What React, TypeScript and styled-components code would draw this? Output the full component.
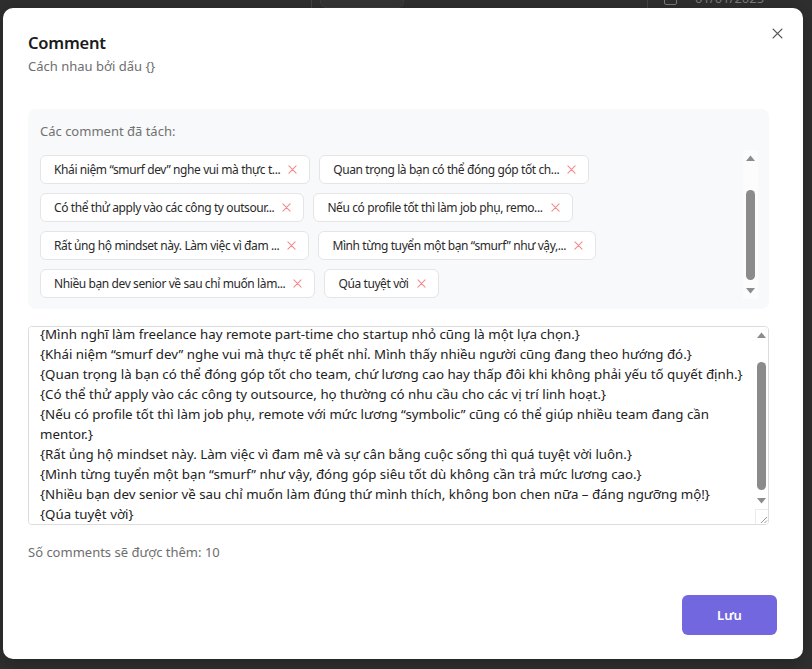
import React, { useEffect, useLayoutEffect, useRef, useState } from "react";
import styled, { createGlobalStyle } from "styled-components";

const FONT = `"Noto Sans", "Open Sans", sans-serif`;

const GlobalStyle = createGlobalStyle`
  html, body { margin: 0; padding: 0; height: 100%; }
  body { background: #2f2f2f; font-family: ${FONT}; overflow: hidden; }
  #root { height: 100%; }
`;

/* ---------- page behind the overlay ---------- */
const Page = styled.div`
  height: 100%;
  background: #2f2f2f;
`;

const PageToolbar = styled.div`
  display: flex;
  align-items: flex-end;
  height: 20px;
  margin-top: -12px;
  color: #8a8a8a;
  font-size: 13px;
`;

const ToolbarDivider = styled.div<{ $ml: number }>`
  width: 1px;
  height: 100%;
  background: #444;
  margin-left: ${(p) => p.$ml}px;
`;

const ToolbarBox = styled.div`
  width: 82px;
  height: 100%;
  margin-left: 8px;
  border-radius: 0 0 6px 6px;
  background: #353535;
  border: 1px solid #3e3e3e;
`;

const DateField = styled.div`
  display: flex;
  align-items: center;
  gap: 18px;
  margin-left: 16px;
  line-height: 20px;
  color: #7c7c7c;
`;

const CalIcon = styled.span`
  width: 11px;
  height: 11px;
  border: 1.5px solid #7c7c7c;
  border-radius: 2px;
`;

const ScrollColumn = styled.div<{ $w: number; $bg: string }>`
  flex: 0 0 ${(p) => p.$w}px;
  display: flex;
  flex-direction: column;
  background: ${(p) => p.$bg};
`;

const ScrollArrow = styled.div`
  flex: 0 0 16px;
  display: flex;
  align-items: center;
  justify-content: center;
`;

const ScrollTrack = styled.div`
  flex: 1;
  position: relative;
`;

const ScrollThumb = styled.div`
  position: absolute;
  left: 50%;
  width: 9px;
  margin-left: -4.5px;
  border-radius: 5px;
  background: #8b8b8b;
`;

const ResizeCorner = styled.div`
  flex: 0 0 14px;
  display: flex;
  align-items: flex-end;
  justify-content: flex-end;
  border-top: 1px solid #ececec;
  border-left: 1px solid #ececec;
  background: #fff;
`;

type Scrollable = HTMLElement | null;

function ScrollBar({
  target,
  width,
  bg,
  corner,
}: {
  target: React.RefObject<Scrollable>;
  width: number;
  bg: string;
  corner?: boolean;
}) {
  const trackRef = useRef<HTMLDivElement>(null);
  const [thumb, setThumb] = useState({ top: 0, height: 0 });

  useLayoutEffect(() => {
    const el = target.current;
    const track = trackRef.current;
    if (!el || !track) return;
    const update = () => {
      const len = track.clientHeight - 4;
      const h = Math.max(20, (len * el.clientHeight) / el.scrollHeight);
      const max = el.scrollHeight - el.clientHeight;
      const top = max > 0 ? 1 + ((len - h) * el.scrollTop) / max : 1;
      setThumb({ top, height: h });
    };
    el.scrollTop = el.scrollHeight;
    update();
    el.addEventListener("scroll", update);
    return () => el.removeEventListener("scroll", update);
  }, [target]);

  return (
    <ScrollColumn $w={width} $bg={bg}>
      <ScrollArrow>
        <svg width="9" height="6" viewBox="0 0 9 6">
          <polygon points="0,6 4.5,0.5 9,6" fill="#8c8c8c" />
        </svg>
      </ScrollArrow>
      <ScrollTrack ref={trackRef}>
        <ScrollThumb style={{ top: thumb.top, height: thumb.height }} />
      </ScrollTrack>
      <ScrollArrow>
        <svg width="9" height="6" viewBox="0 0 9 6">
          <polygon points="0,0 9,0 4.5,5.5" fill="#8c8c8c" />
        </svg>
      </ScrollArrow>
      {corner && (
        <ResizeCorner>
          <svg width="10" height="10" viewBox="0 0 10 10">
            <path d="M9 3L3 9M9 6.5L6.5 9" stroke="#8a8a8a" strokeWidth="0.9" />
          </svg>
        </ResizeCorner>
      )}
    </ScrollColumn>
  );
}

/* ---------- modal ---------- */
const Modal = styled.div`
  position: absolute;
  left: 3px;
  top: 8px;
  width: 800px;
  height: 651px;
  box-sizing: border-box;
  padding: 23px 26px 24px 25px;
  background: #fff;
  border-radius: 10px;
  display: flex;
  flex-direction: column;
  box-shadow: 0 4px 20px rgba(0, 0, 0, 0.25);
`;

const CloseButton = styled.button`
  position: absolute;
  top: 19px;
  right: 19px;
  width: 13px;
  height: 13px;
  padding: 0;
  border: 0;
  background: transparent;
  display: flex;
  align-items: center;
  justify-content: center;
  cursor: pointer;
`;

const Title = styled.h2`
  margin: 0;
  font-size: 16.5px;
  letter-spacing: -0.2px;
  line-height: 24px;
  font-weight: 600;
  color: #1b1b1b;
`;

const Subtitle = styled.div`
  margin-top: 2px;
  font-size: 13px;
  line-height: 18px;
  color: #6e6e6e;
`;

const Body = styled.div`
  margin-right: 8px;
  display: flex;
  flex-direction: column;
`;

const Panel = styled.section`
  margin-top: 34px;
  padding: 13px 11px 10px 12px;
  background: #f8f9fa;
  border-radius: 8px;
`;

const PanelLabel = styled.div`
  font-size: 13px;
  line-height: 18px;
  color: #727272;
`;

const ListFrame = styled.div`
  margin-top: 10px;
  height: 149px;
  display: flex;
`;

const TagList = styled.div`
  flex: 1;
  box-sizing: border-box;
  padding: 6px 0 1px;
  overflow-y: auto;
  scrollbar-width: none;
  display: flex;
  flex-wrap: wrap;
  align-content: flex-start;
  gap: 9px;
`;

const Tag = styled.div`
  display: inline-flex;
  align-items: center;
  gap: 8px;
  height: 29px;
  box-sizing: border-box;
  padding: 0 12px 0 13px;
  background: #fff;
  border: 1px solid #e5e5e8;
  border-radius: 6px;
  font-size: 12px;
  letter-spacing: -0.4px;
  color: #2a2a2a;
  white-space: nowrap;
`;

const TagRemove = styled.span`
  display: inline-flex;
  width: 9px;
  height: 9px;
  cursor: pointer;
`;

const EditorFrame = styled.div`
  margin-top: 17px;
  height: 199px;
  box-sizing: border-box;
  border: 1px solid #dcdcdc;
  border-radius: 4px;
  display: flex;
  overflow: hidden;
`;

const Editor = styled.textarea`
  flex: 1;
  box-sizing: border-box;
  padding: 4px 0 0 11px;
  border: 0;
  font-family: ${FONT};
  font-size: 13.3px;
  line-height: 20px;
  color: #222;
  resize: none;
  outline: none;
  scrollbar-width: none;
`;

const CountText = styled.div`
  margin-top: 18px;
  font-size: 13px;
  line-height: 18px;
  color: #6e6e6e;
`;

const Footer = styled.div`
  margin-top: auto;
  display: flex;
  justify-content: flex-end;
`;

const SaveButton = styled.button`
  width: 95px;
  height: 40px;
  border: 0;
  border-radius: 6px;
  background: #7367e0;
  color: #fff;
  font-family: ${FONT};
  font-size: 13px;
  font-weight: 600;
  cursor: pointer;
`;

const comments = [
  "Mình cũng đang tìm một công việc nhẹ nhàng hơn sau nhiều năm làm việc.",
  "Mình nghĩ làm freelance hay remote part-time cho startup nhỏ cũng là một lựa chọn.",
  "Khái niệm “smurf dev” nghe vui mà thực tế phết nhỉ. Mình thấy nhiều người cũng đang theo hướng đó.",
  "Quan trọng là bạn có thể đóng góp tốt cho team, chứ lương cao hay thấp đôi khi không phải yếu tố quyết định.",
  "Có thể thử apply vào các công ty outsource, họ thường có nhu cầu cho các vị trí linh hoạt.",
  "Nếu có profile tốt thì làm job phụ, remote với mức lương “symbolic” cũng có thể giúp nhiều team đang cần mentor.",
  "Rất ủng hộ mindset này. Làm việc vì đam mê và sự cân bằng cuộc sống thì quá tuyệt vời luôn.",
  "Mình từng tuyển một bạn “smurf” như vậy, đóng góp siêu tốt dù không cần trả mức lương cao.",
  "Nhiều bạn dev senior về sau chỉ muốn làm đúng thứ mình thích, không bon chen nữa – đáng ngưỡng mộ!",
  "Qúa tuyệt vời",
];

const truncate = (s: string, n = 40) => (s.length > n ? s.slice(0, n) + "..." : s);

const XIcon = ({ color, size, width }: { color: string; size: number; width: number }) => (
  <svg width={size} height={size} viewBox="0 0 10 10" fill="none">
    <path d="M1 1L9 9M9 1L1 9" stroke={color} strokeWidth={width} strokeLinecap="round" />
  </svg>
);

export default function App() {
  const listRef = useRef<HTMLDivElement>(null);
  const areaRef = useRef<HTMLTextAreaElement>(null);

  useEffect(() => {
    if (listRef.current) listRef.current.scrollTop = listRef.current.scrollHeight;
    if (areaRef.current) areaRef.current.scrollTop = areaRef.current.scrollHeight;
  }, []);

  const text = comments.map((c) => `{${c}}`).join("\n");

  return (
    <>
      <GlobalStyle />
      <Page>
        <PageToolbar>
          <ToolbarDivider $ml={311} />
          <ToolbarBox />
          <ToolbarDivider $ml={243} />
          <DateField>
            <CalIcon />
            <span>01/01/2025</span>
          </DateField>
        </PageToolbar>
      </Page>
      <Modal role="dialog">
        <CloseButton aria-label="Đóng">
          <XIcon color="#555" size={11} width={1.2} />
        </CloseButton>
        <Title>Comment</Title>
        <Subtitle>Cách nhau bởi dấu {"{}"}</Subtitle>
        <Body>
          <Panel>
            <PanelLabel>Các comment đã tách:</PanelLabel>
            <ListFrame>
              <TagList ref={listRef}>
                {comments.map((c, i) => (
                  <Tag key={i}>
                    <span>{truncate(c)}</span>
                    <TagRemove>
                      <XIcon color="#f28b8b" size={9} width={1.2} />
                    </TagRemove>
                  </Tag>
                ))}
              </TagList>
              <ScrollBar target={listRef} width={15} bg="#fcfcfd" />
            </ListFrame>
          </Panel>
          <EditorFrame>
            <Editor ref={areaRef} defaultValue={text} spellCheck={false} />
            <ScrollBar target={areaRef} width={13} bg="#fff" corner />
          </EditorFrame>
          <CountText>Số comments sẽ được thêm: {comments.length}</CountText>
        </Body>
        <Footer>
          <SaveButton>Lưu</SaveButton>
        </Footer>
      </Modal>
    </>
  );
}
